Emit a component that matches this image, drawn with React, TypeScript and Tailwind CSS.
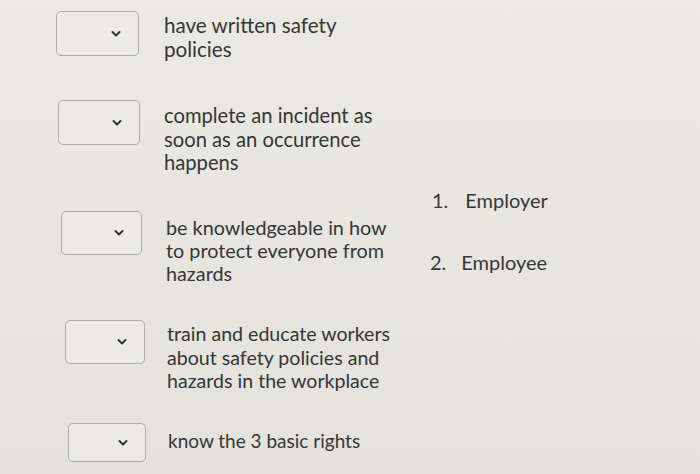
import React from "react";

function Box({ w = 83, h = 45 }: { w?: number; h?: number }) {
  return (
    <div
      className="relative shrink-0 rounded-[5px] border border-[#adada9] bg-[#ebeae6]"
      style={{ width: w, height: h }}
    >
      <svg
        className="absolute right-[17px] top-1/2 -translate-y-1/2"
        width="10"
        height="7"
        viewBox="0 0 10 7"
      >
        <path d="M1.5 1.5 L5 5 L8.5 1.5" fill="none" stroke="#2f2f2f" strokeWidth="1.9" strokeLinecap="round" strokeLinejoin="round" />
      </svg>
    </div>
  );
}

type Row = { lines: string[]; h: string; ml: string; gap: string; mt: string; text: string; bw?: number; bh?: number };

const rows: Row[] = [
  { lines: ["have written safety", "policies"], h: "h-[89px]", ml: "ml-[56px]", gap: "gap-[25px]", mt: "mt-[2px]", text: "text-[20.6px] leading-[24px]" },
  { lines: ["complete an incident as", "soon as an occurrence", "happens"], h: "h-[111px]", ml: "ml-[58px]", gap: "gap-[24px]", mt: "mt-[4px]", text: "text-[20.2px] leading-[23.5px]", bw: 82 },
  { lines: ["be knowledgeable in how", "to protect everyone from", "hazards"], h: "h-[109px]", ml: "ml-[61px]", gap: "gap-[24px]", mt: "mt-[5px]", text: "text-[19.8px] leading-[23px]", bw: 81, bh: 44 },
  { lines: ["train and educate workers", "about safety policies and", "hazards in the workplace"], h: "h-[103px]", ml: "ml-[65px]", gap: "gap-[22px]", mt: "mt-[2px]", text: "text-[19.6px] leading-[23.5px]", bw: 80, bh: 44 },
  { lines: ["know the 3 basic rights"], h: "h-[51px]", ml: "ml-[68px]", gap: "gap-[22px]", mt: "mt-[6px]", text: "text-[19px] leading-[24px]", bw: 78, bh: 39 },
];

export default function App() {
  return (
    <div
      className="flex h-[474px] w-[700px] overflow-hidden bg-gradient-to-b from-[#eae9e4] to-[#e3e2dd] text-[#363636]"
      style={{ fontFamily: "Lato, 'Open Sans', sans-serif" }}
    >
      <div className="flex w-[420px] flex-col pt-[11px]">
        {rows.map((r, i) => (
          <div key={i} className={`flex items-start ${r.h} ${r.ml} ${r.gap}`}>
            <Box w={r.bw} h={r.bh} />
            <div className={`${r.mt} ${r.text}`}>
              {r.lines.map((l, j) => (
                <div key={j} className="whitespace-nowrap">{l}</div>
              ))}
            </div>
          </div>
        ))}
      </div>
      <div className="flex flex-col pt-[188px] text-[20px] leading-[24px]">
        <div className="ml-[12px] flex gap-[17px]">
          <span>1.</span>
          <span>Employer</span>
        </div>
        <div className="ml-[10px] mt-[38px] flex gap-[15px]">
          <span>2.</span>
          <span>Employee</span>
        </div>
      </div>
    </div>
  );
}
